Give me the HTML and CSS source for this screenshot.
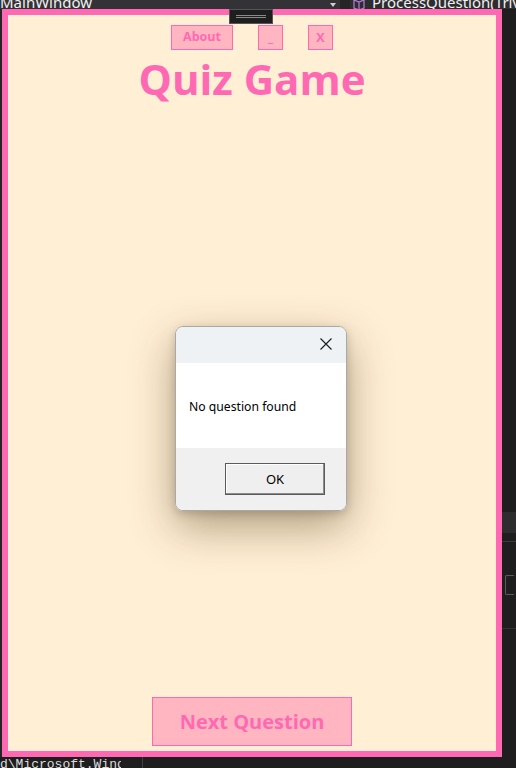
FILE: index.html
```html
<!DOCTYPE html>
<html>
<head>
<meta charset="utf-8">
<link rel="stylesheet" href="styles.css">
</head>
<body>
<div class="topbar">
  <div class="tb-left">
    <span class="tb-text">MainWindow</span>
    <span class="tb-arrow"></span>
  </div>
  <div class="tb-sep"></div>
  <div class="tb-right">
    <svg class="tb-icon" width="14" height="14" viewBox="0 0 14 14"><path d="M2 3 L7 1 L12 3 L12 11 L7 13 L2 11 Z M2 3 L7 5 L12 3 M7 5 L7 13" fill="none" stroke="#b180d7" stroke-width="1.2"/></svg>
    <span class="tb-text">ProcessQuestion(Trivia</span>
  </div>
</div>
<div class="mainrow">
  <div class="gutter-left"></div>
  <div class="window">
    <div class="handle"><span class="hline"></span><span class="hline"></span></div>
    <div class="controls">
      <button class="ctl about">About</button>
      <button class="ctl sq">_</button>
      <button class="ctl sq">X</button>
    </div>
    <h1 class="title">Quiz Game</h1>
    <button class="next">Next Question</button>
  </div>
  <div class="gutter-right">
    <div class="gr-top"></div>
    <div class="gr-band"></div>
    <div class="gr-line"></div>
    <div class="gr-icon"></div>
    <div class="gr-line2"></div>
  </div>
</div>
<div class="bottombar">
  <span class="bb-text">d\Microsoft.Wind</span>
  <span class="bb-sep"></span>
</div>

<div class="dialog">
  <div class="dlg-head">
    <svg class="dlg-close" width="12" height="12" viewBox="0 0 12 12"><path d="M0.5 0.5 L11.5 11.5 M11.5 0.5 L0.5 11.5" stroke="#1a1a1a" stroke-width="1.1"/></svg>
  </div>
  <div class="dlg-body"><span class="dlg-msg">No question found</span></div>
  <div class="dlg-foot"><button class="ok">OK</button></div>
</div>
</body>
</html>
```
FILE: styles.css
```css
html, body {
  margin: 0;
  padding: 0;
}
body {
  width: 516px;
  height: 768px;
  overflow: hidden;
  background: #1e1e1e;
  position: relative;
  font-family: "Open Sans", "Noto Sans", sans-serif;
}
.topbar {
  height: 9px;
  display: flex;
  overflow: hidden;
}
.tb-left {
  width: 340px;
  background: #333337;
  position: relative;
  overflow: hidden;
}
.tb-text {
  display: block;
  font-family: "Noto Sans", sans-serif;
  font-size: 15px;
  line-height: 15px;
  margin-top: -5px;
  color: #f1f1f1;
  white-space: nowrap;
}
.tb-arrow {
  position: absolute;
  left: 330px;
  top: 3px;
  width: 0;
  height: 0;
  border-left: 3px solid transparent;
  border-right: 3px solid transparent;
  border-top: 4px solid #d0d0d0;
}
.tb-sep {
  width: 10px;
  background: #252526;
}
.tb-right {
  flex: 1;
  background: #2d2d30;
  display: flex;
  align-items: flex-start;
  gap: 6px;
  padding-left: 2px;
  overflow: hidden;
}
.tb-icon {
  margin-top: -3px;
  flex: none;
}
.mainrow {
  display: flex;
  height: 748px;
}
.gutter-left {
  width: 2px;
  background: #252526;
}
.window {
  width: 500px;
  height: 748px;
  box-sizing: border-box;
  border: 6px solid #ff69b4;
  background: #ffefd5;
  position: relative;
  display: flex;
  flex-direction: column;
  align-items: center;
  padding: 10px 0 5px;
}
.handle {
  position: absolute;
  left: 221px;
  top: -6px;
  width: 44px;
  height: 15px;
  box-sizing: border-box;
  background: #1e1e1e;
  border: 1px solid #555;
  display: flex;
  flex-direction: column;
  align-items: center;
  justify-content: center;
  gap: 1px;
}
.hline {
  display: block;
  width: 30px;
  height: 1px;
  background: #8a8a8a;
}
.controls {
  display: flex;
  gap: 25px;
  height: 25px;
}
.ctl {
  height: 25px;
  box-sizing: border-box;
  border: 1px solid #ff69b4;
  background: #ffb6c1;
  color: #ff69b4;
  font-family: "Open Sans", sans-serif;
  font-weight: 700;
  font-size: 12.5px;
  padding: 0;
  margin: 0;
  line-height: 1;
}
.about {
  width: 62px;
}
.sq {
  width: 25px;
  padding-top: 2px;
}
.title {
  margin: 8px 0 0;
  font-family: "Open Sans", sans-serif;
  font-weight: 700;
  font-size: 42px;
  line-height: 42px;
  color: #ff69b4;
}
.next {
  margin: auto 0 0;
  width: 200px;
  height: 49px;
  box-sizing: border-box;
  border: 1px solid #ff69b4;
  background: #ffb6c1;
  color: #ff69b4;
  font-family: "Open Sans", sans-serif;
  font-weight: 700;
  font-size: 20px;
  padding: 0;
}
.gutter-right {
  flex: 1;
  display: flex;
  flex-direction: column;
  background: #1e1e1e;
}
.gr-top {
  height: 503px;
}
.gr-band {
  height: 21px;
  background: #2d2d30;
}
.gr-line {
  margin-top: 8px;
  height: 1px;
  background: #3a3a3a;
}
.gr-icon {
  margin: 33px 0 0 3px;
  width: 8px;
  height: 18px;
  border: 1px solid #5a5a5a;
  border-right: none;
  border-radius: 2px 0 0 2px;
}
.gr-line2 {
  margin-top: 33px;
  height: 1px;
  background: #333;
}
.bottombar {
  height: 11px;
  display: flex;
  overflow: hidden;
  background: #1e1e1e;
}
.bb-text {
  display: block;
  width: 121px;
  overflow: hidden;
  white-space: nowrap;
  font-family: "Liberation Mono", monospace;
  font-size: 13px;
  line-height: 13px;
  margin-top: 1px;
  color: #dcdcdc;
}
.bb-sep {
  display: block;
  width: 1px;
  background: #3f3f46;
  margin-left: 21px;
}
.dialog {
  position: absolute;
  left: 175px;
  top: 326px;
  width: 172px;
  height: 185px;
  box-sizing: border-box;
  border: 1px solid #a9a9a9;
  border-radius: 8px;
  overflow: hidden;
  display: flex;
  flex-direction: column;
  box-shadow: 0 16px 44px rgba(70, 45, 10, 0.42), 0 3px 10px rgba(0, 0, 0, 0.18);
  font-family: "Noto Sans", sans-serif;
}
.dlg-head {
  height: 36px;
  background: #eef2f4;
  position: relative;
}
.dlg-close {
  position: absolute;
  left: 144px;
  top: 11px;
}
.dlg-body {
  height: 85px;
  background: #ffffff;
  box-sizing: border-box;
  padding: 31px 0 0 13px;
}
.dlg-msg {
  font-size: 12.2px;
  line-height: 16px;
  color: #000;
}
.dlg-foot {
  flex: 1;
  background: #f0f0f0;
  display: flex;
  justify-content: flex-end;
  align-items: flex-start;
  padding: 15px 21px 0 0;
}
.ok {
  width: 100px;
  height: 32px;
  box-sizing: border-box;
  border: 1px solid #5a5a5a;
  box-shadow: inset -1px -1px 0 #8c8c8c, inset 1px 1px 0 #ffffff;
  background: #efefef;
  font-family: "Noto Sans", sans-serif;
  font-size: 13px;
  color: #000;
  padding: 0;
}
```
